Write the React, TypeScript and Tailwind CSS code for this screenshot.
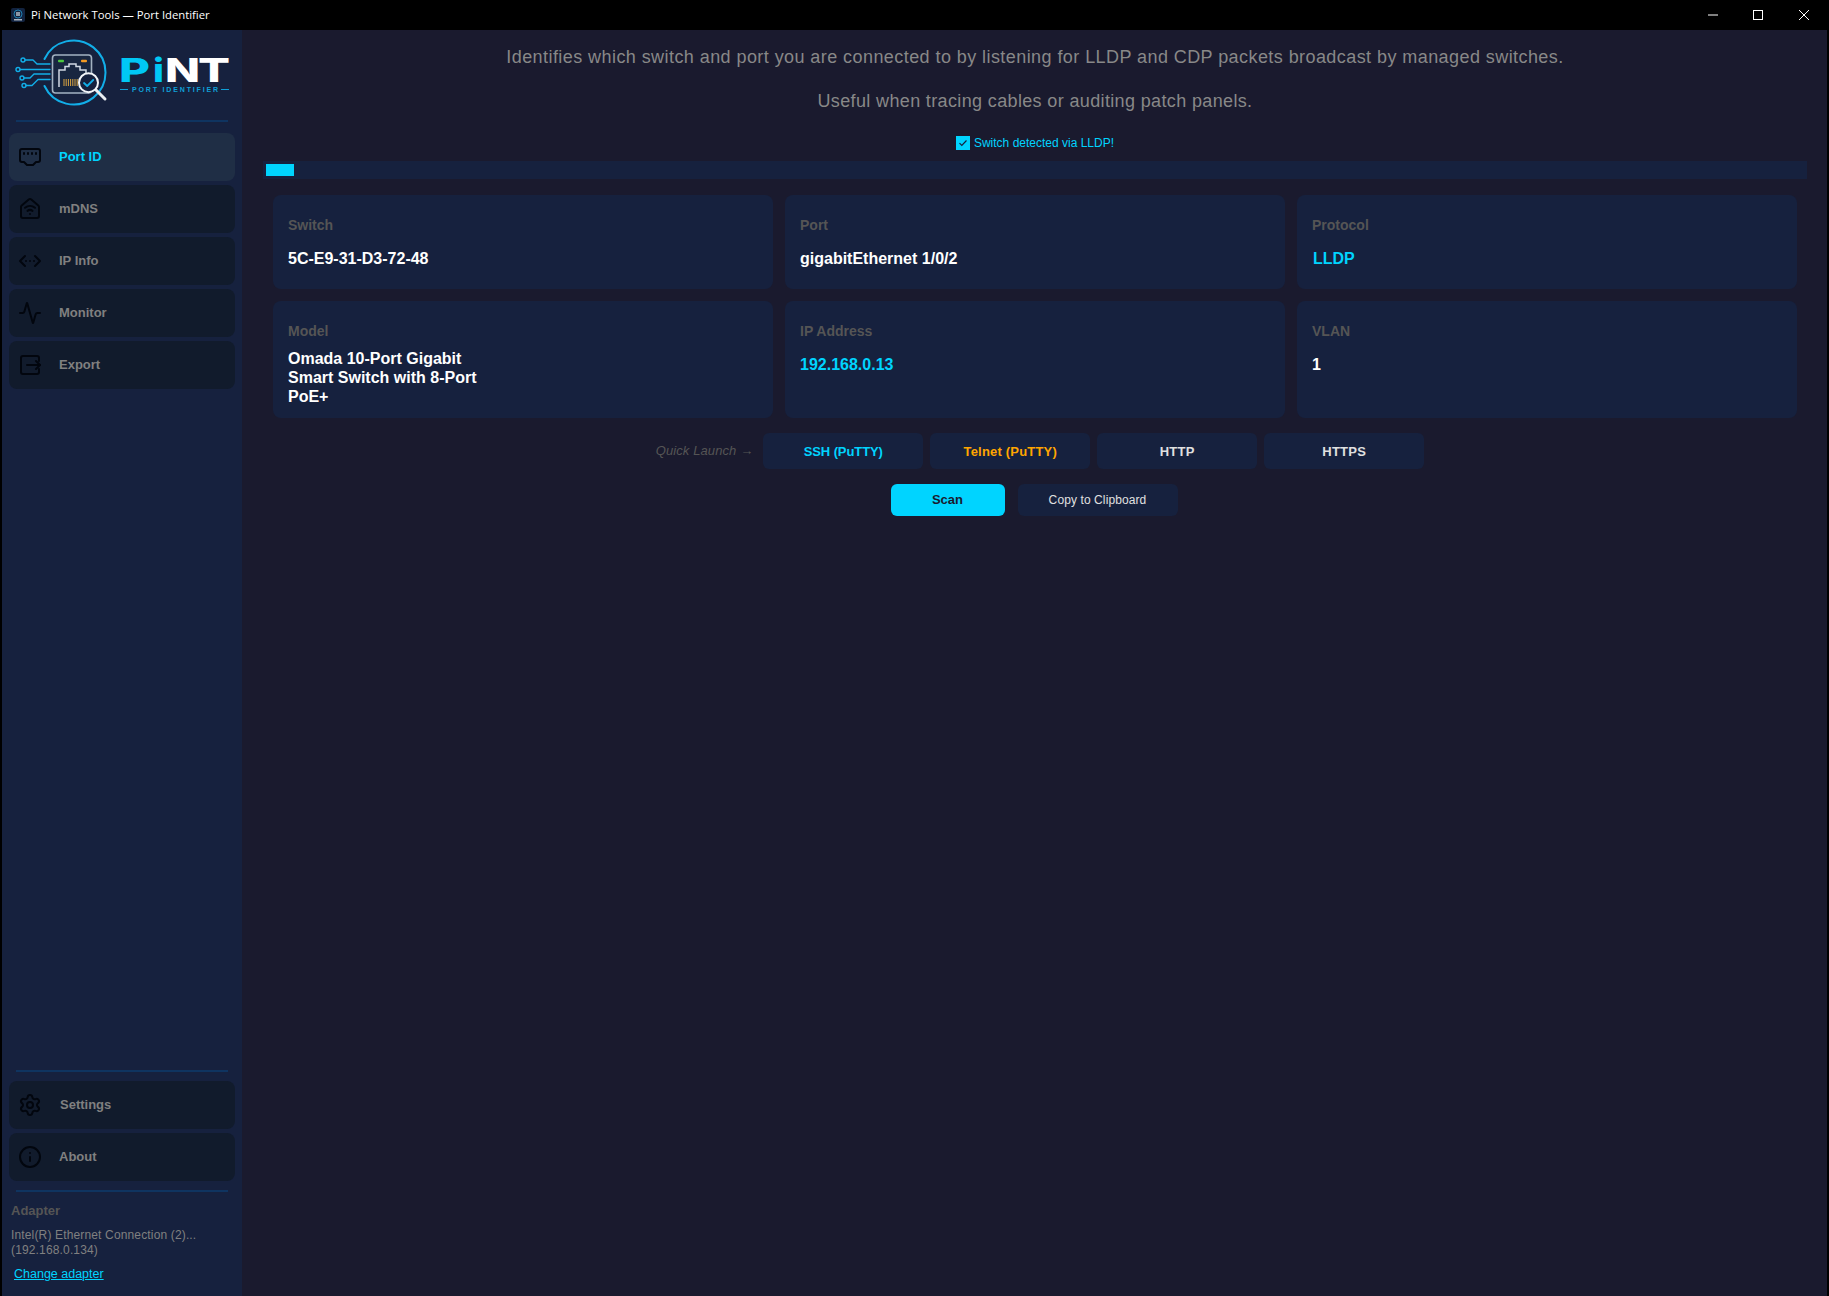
import React from "react";
import { EthernetPort, HouseWifi, ChevronsLeftRightEllipsis, Activity, Settings, Info } from "lucide-react";

const ExportIcon = (p: { size: number; strokeWidth: number; className?: string }) => (
  <svg width={p.size} height={p.size} viewBox="0 0 24 24" fill="none" stroke="currentColor" strokeWidth={p.strokeWidth} strokeLinecap="round" strokeLinejoin="round" className={p.className}>
    <path d="M21 8V5a2 2 0 0 0-2-2H5a2 2 0 0 0-2 2v14a2 2 0 0 0 2 2h14a2 2 0 0 0 2-2v-3" />
    <path d="M9 12h13" />
    <path d="m18 8 4 4-4 4" />
  </svg>
);

function Logo() {
  return (
    <svg viewBox="2 30 240 90" width={240} height={90} className="block">
      <g fill="none" stroke="#12aee8" strokeWidth="1.4" strokeLinecap="round" strokeLinejoin="round">
        <circle cx="23" cy="60" r="2" />
        <circle cx="18" cy="69.5" r="2" />
        <circle cx="22" cy="78" r="2" />
        <circle cx="24" cy="85.5" r="2" />
        <path d="M25 60h8l4 4h13" />
        <path d="M20 69.5h30" />
        <path d="M24 78h6l4-4h16" />
        <path d="M26 85.5h6l6-6h12" />
      </g>
      <path d="M44.5 59A32 32 0 1 1 44.5 86" fill="none" stroke="#12aee8" strokeWidth="2" strokeLinecap="round" />
      <rect x="52.5" y="55" width="39" height="38" rx="3" fill="#182640" stroke="#a3b2c2" strokeWidth="1.6" />
      <rect x="58" y="59.8" width="6" height="2.4" rx="1" fill="#4cc93f" />
      <rect x="81" y="59.8" width="6" height="2.4" rx="1" fill="#f39a24" />
      <path d="M59 87V70h6v-3.500h4V64h7v2.500h4V70h6v12" fill="none" stroke="#cfd8e2" strokeWidth="1.5" />
      <g stroke="#d9a441" strokeWidth="1">
        <path d="M64 79v7M66.200 79v7M68.400 79v7M70.600 79v7M72.800 79v7M75 79v7M77.200 79v7" />
      </g>
      <path d="M96 90l9 9" stroke="#e8edf2" strokeWidth="3" strokeLinecap="round" />
      <circle cx="88.500" cy="82.700" r="9.500" fill="#16213e" stroke="#f2f5f8" strokeWidth="2" />
      <path d="M84 83l3.200 3 6-6" fill="none" stroke="#12aee8" strokeWidth="1.800" strokeLinecap="round" strokeLinejoin="round" />
      <g fontFamily="Inter, 'Liberation Sans', sans-serif" fontWeight="800" fontSize="33">
        <text x="119" y="82" fill="#00c8f5" textLength="31" lengthAdjust="spacingAndGlyphs">P</text>
        <text x="153" y="82" fill="#00c8f5" textLength="11" lengthAdjust="spacingAndGlyphs">i</text>
        <text x="165" y="82" fill="#ffffff" textLength="35" lengthAdjust="spacingAndGlyphs">N</text>
        <text x="198" y="82" fill="#ffffff" textLength="32" lengthAdjust="spacingAndGlyphs">T</text>
      </g>
      <path d="M120 89.500h8M221 89.500h8" stroke="#0f9fd6" strokeWidth="1.200" />
      <text x="132" y="92" fill="#0f9fd6" fontFamily="'Liberation Sans', sans-serif" fontWeight="700" fontSize="7" textLength="86" lengthAdjust="spacing">PORT IDENTIFIER</text>
    </svg>
  );
}

const NavItem = ({ icon: Icon, label, active, lx = "pl-0" }: { icon: React.ElementType; label: string; active?: boolean; lx?: string }) => (
  <div className={`flex h-12 items-center rounded-lg pl-[9px] ${active ? "bg-[#1f2e45]" : "bg-[#111b2c]"}`}>
    <Icon size={24} strokeWidth={2} className="shrink-0 text-[#02060e]" />
    <span className={`ml-[17px] text-[13px] font-bold ${lx} ${active ? "text-[#00d4ff]" : "text-[#808080]"}`}>{label}</span>
  </div>
);

const Card = ({ label, value, tone = "text-white", mt = "mt-[16px]", pb = "pb-[21px]" }: { label: string; value: React.ReactNode; tone?: string; mt?: string; pb?: string }) => (
  <div className={`rounded-lg bg-[#16213e] pl-[15px] pt-[22px] ${pb}`}>
    <div className="h-4 text-[14px] font-bold leading-4 text-[#555555]">{label}</div>
    <div className={`${mt} text-[16px] font-bold leading-[19px] ${tone}`}>{value}</div>
  </div>
);

const QuickBtn = ({ label, tone }: { label: string; tone: string }) => (
  <div className={`flex h-9 w-40 items-center justify-center rounded-md bg-[#16213e] pt-px text-[13px] font-bold ${tone}`}>{label}</div>
);

export default function App() {
  return (
    <div className="flex h-[1296px] w-[1829px] flex-col overflow-hidden bg-black font-['Liberation_Sans',Arial,sans-serif]">
      <div className="flex h-[30px] shrink-0 items-center bg-black">
        <svg width="14" height="14" viewBox="0 0 14 14" className="ml-[11px]">
          <rect width="14" height="14" rx="2" fill="#12233f" />
          <circle cx="7" cy="6" r="4" fill="none" stroke="#1f7fb0" strokeWidth="1" />
          <rect x="5" y="4" width="4" height="4" fill="#8a97a6" />
          <rect x="3" y="11" width="8" height="1.500" fill="#a8b4c0" />
        </svg>
        <span className="ml-[6px] font-['Open_Sans',sans-serif] text-[11.300px] text-white">Pi Network Tools — Port Identifier</span>
        <div className="ml-auto flex items-center pr-[20px]">
          <svg width="10" height="10" viewBox="0 0 10 10" className="mr-[35px]"><path d="M0 5h10" stroke="#fff" strokeWidth="1" /></svg>
          <svg width="10" height="10" viewBox="0 0 10 10" className="mr-[36px]"><rect x=".5" y=".5" width="9" height="9" fill="none" stroke="#fff" strokeWidth="1" /></svg>
          <svg width="10" height="10" viewBox="0 0 10 10"><path d="M0 0l10 10M10 0L0 10" stroke="#fff" strokeWidth="1" /></svg>
        </div>
      </div>

      <div className="flex min-h-0 flex-1 pl-[2px] pr-[2px]">
        <aside className="flex w-[240px] shrink-0 flex-col bg-[#16213e]">
          <Logo />
          <div className="mx-[14px] h-[2px] bg-[#0f3460]" />
          <nav className="mt-[11px] flex flex-col gap-1 pl-[7px] pr-[7px]">
            <NavItem icon={EthernetPort} label="Port ID" active />
            <NavItem icon={HouseWifi} label="mDNS" />
            <NavItem icon={ChevronsLeftRightEllipsis} label="IP Info" />
            <NavItem icon={Activity} label="Monitor" />
            <NavItem icon={ExportIcon} label="Export" />
          </nav>
          <div className="flex-1" />
          <div className="mx-[14px] h-[2px] bg-[#0f3460]" />
          <div className="mt-[9px] flex flex-col gap-1 px-[7px]">
            <NavItem icon={Settings} label="Settings" lx="pl-px" />
            <NavItem icon={Info} label="About" />
          </div>
          <div className="mx-[14px] mt-[9px] h-[2px] bg-[#0f3460]" />
          <div className="pb-[14px] pl-[9px] pt-[11px]">
            <div className="text-[13px] font-bold leading-4 text-[#555555]">Adapter</div>
            <div className="mt-[9px] text-[12px] leading-[15px] tracking-[0.15px] text-[#808080]">
              Intel(R) Ethernet Connection (2)...
              <br />
              (192.168.0.134)
            </div>
            <a className="ml-[3px] mt-[9px] block text-[12.500px] leading-[15px] text-[#00d4ff] underline">Change adapter</a>
          </div>
        </aside>

        <main className="min-w-0 flex-1 bg-[#1a1a2e] pl-[21px] pr-[20px] pt-[15px]">
          <p className="text-center text-[18px] leading-6 tracking-[0.43px] text-[#888888]">Identifies which switch and port you are connected to by listening for LLDP and CDP packets broadcast by managed switches.</p>
          <p className="mt-5 text-center text-[18px] leading-6 tracking-[0.36px] text-[#888888]">Useful when tracing cables or auditing patch panels.</p>
          <div className="mt-[23px] flex h-[14px] items-center justify-center gap-1">
            <span className="flex h-[14px] w-[14px] items-center justify-center bg-[#00d4ff]">
              <svg width="10" height="10" viewBox="0 0 10 10"><path d="M1.500 5.200l2.300 2.300L8.500 2.500" fill="none" stroke="#16213e" strokeWidth="1.200" /></svg>
            </span>
            <span className="text-[12px] leading-[14px] text-[#00d4ff]">Switch detected via LLDP!</span>
          </div>
          <div className="mt-[11px] flex h-[18px] items-center bg-[#16213e] pl-[3px]">
            <div className="h-3 w-[28px] bg-[#00d4ff]" />
          </div>
          <div className="mt-4 grid grid-cols-3 gap-3 px-[10px]">
            <Card label="Switch" value="5C-E9-31-D3-72-48" />
            <Card label="Port" value="gigabitEthernet 1/0/2" />
            <Card label="Protocol" value="LLDP" tone="text-[#00d4ff] pl-px" />
            <Card
              label="Model"
              value={<>Omada 10-Port Gigabit<br />Smart Switch with 8-Port<br />PoE+</>}
              mt="mt-[10px]"
              pb="pb-[12px]"
            />
            <Card label="IP Address" value="192.168.0.13" tone="text-[#00d4ff]" />
            <Card label="VLAN" value="1" />
          </div>
          <div className="ml-[10px] mt-[15px] flex items-center justify-center gap-[7px]">
            <span className="mr-[3px] text-[13px] italic tracking-[0.1px] text-[#555555]">Quick Launch →</span>
            <QuickBtn label="SSH (PuTTY)" tone="text-[#00d4ff] tracking-[-0.1px]" />
            <QuickBtn label="Telnet (PuTTY)" tone="text-[#ffa500] tracking-[0.2px]" />
            <QuickBtn label="HTTP" tone="text-[#e0e0e0] tracking-[0.3px]" />
            <QuickBtn label="HTTPS" tone="text-[#e0e0e0] tracking-[0.3px]" />
          </div>
          <div className="mr-[2px] mt-[15px] flex justify-center gap-[13px]">
            <div className="flex h-8 w-[114px] items-center justify-center rounded-md bg-[#00d4ff] text-[13px] font-bold text-[#1a1a2e]">Scan</div>
            <div className="flex h-8 w-40 items-center justify-center rounded-md bg-[#16213e] text-[12px] tracking-[0.1px] text-[#e0e0e0]">Copy to Clipboard</div>
          </div>
        </main>
      </div>
    </div>
  );
}
